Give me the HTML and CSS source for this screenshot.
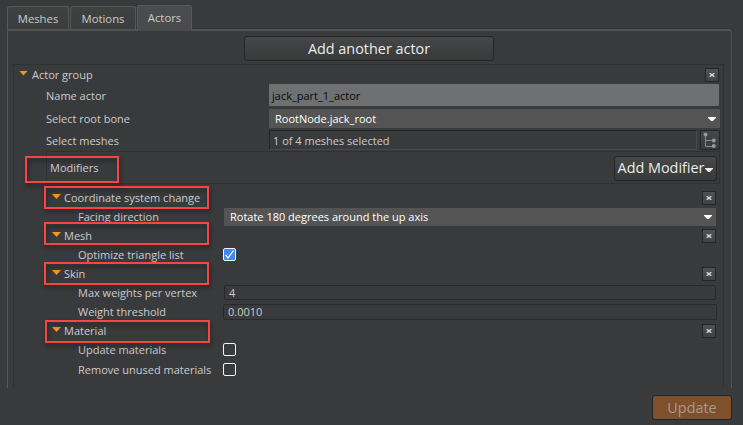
FILE: index.html
```html
<!DOCTYPE html>
<html lang="en">
<head>
<meta charset="utf-8">
<title>Actors</title>
<link rel="stylesheet" href="styles.css">
</head>
<body>
<svg class="defs" width="0" height="0">
  <symbol id="close" viewBox="0 0 6 6"><path d="M.5 1h1.2L3 2.3 4.3 1h1.2v.7L4.2 3l1.3 1.3V5H4.3L3 3.7 1.700 5H.5v-.7L1.800 3 .5 1.700z" fill="#d8d8d8"/></symbol>
  <symbol id="down" viewBox="0 0 8 4"><path d="M0 0h8v.8L4.800 4H3.200L0 .8z" fill="currentColor"/></symbol>
</svg>
<nav class="tabs">
  <span class="tab meshes">Meshes</span>
  <span class="tab motions">Motions</span>
  <span class="tab active">Actors</span>
</nav>
<main class="panel">
  <button class="button add-actor"><span>Add another actor</span></button>
  <section class="group">
    <header class="group-head">
      <i class="arrow"></i><span class="label t-group">Actor group</span>
      <button class="close"><svg><use href="#close"/></svg></button>
    </header>
    <div class="row name"><label class="label">Name actor</label><div class="text-field"><span>jack_part_1_actor</span></div></div>
    <div class="row root"><label class="label">Select root bone</label><div class="select"><span>RootNode.jack_root</span><svg><use href="#down"/></svg></div></div>
    <div class="row mesh-select"><label class="label">Select meshes</label><div class="readonly"><span>1 of 4 meshes selected</span></div>
      <button class="tree"><svg viewBox="0 0 14 16"><path d="M2.500 2v12.500h8M2.500 8.500h8" fill="none" stroke="#8b8b8b"/><circle cx="2.500" cy="2.500" r="1.900" fill="#999"/><circle cx="10.800" cy="8.500" r="1.900" fill="#999"/><circle cx="10.800" cy="14" r="1.900" fill="#999"/></svg></button>
    </div>
    <div class="modifier-bar"><span class="label">Modifiers</span><button class="button add-modifier"><span>Add Modifier</span><svg><use href="#down"/></svg></button></div>
    <div class="modifiers">
      <div class="mod-head"><i class="arrow"></i><span class="label">Coordinate system change</span><button class="close"><svg><use href="#close"/></svg></button></div>
      <div class="mod-row"><label class="label">Facing direction</label><div class="select facing"><span>Rotate 180 degrees around the up axis</span><svg><use href="#down"/></svg></div></div>
      <div class="mod-head"><i class="arrow"></i><span class="label">Mesh</span><button class="close"><svg><use href="#close"/></svg></button></div>
      <div class="mod-row"><label class="label">Optimize triangle list</label><i class="check checked"><svg viewBox="0 0 11 11"><path d="M1.500 6l2.500 3 5.500-7.500" fill="none" stroke="#fff" stroke-width="1.200"/></svg></i></div>
      <div class="mod-head"><i class="arrow"></i><span class="label">Skin</span><button class="close"><svg><use href="#close"/></svg></button></div>
      <div class="mod-row"><label class="label">Max weights per vertex</label><div class="number weights"><span>4</span></div></div>
      <div class="mod-row"><label class="label">Weight threshold</label><div class="number"><span>0.0010</span></div></div>
      <div class="mod-head"><i class="arrow"></i><span class="label">Material</span><button class="close"><svg><use href="#close"/></svg></button></div>
      <div class="mod-row"><label class="label">Update materials</label><i class="check"></i></div>
      <div class="mod-row last"><label class="label">Remove unused materials</label><i class="check"></i></div>
    </div>
  </section>
</main>
<footer><button class="button update"><span>Update</span></button></footer>
<div class="mark mark-modifiers"></div>
<div class="mark mark-coordinate"></div>
<div class="mark mark-mesh"></div>
<div class="mark mark-skin"></div>
<div class="mark mark-material"></div>
</body>
</html>
```
FILE: styles.css
```css
* { box-sizing: border-box; }
body {
  margin: 0;
  width: 743px;
  height: 425px;
  padding: 5px 11px 0 7px;
  overflow: hidden;
  background: #393a3c;
  color: #cbcbcb;
  font: 11px/18px "Open Sans", sans-serif;
  white-space: nowrap;
}
.defs { position: absolute; }
button { font: inherit; color: inherit; padding: 0; margin: 0; }
svg { display: block; }

.tabs { display: flex; align-items: flex-end; height: 24px; font-size: 11.3px; }
.tab {
  height: 23px;
  margin-right: 1px;
  padding-top: 3px;
  border: 1px solid #57585a;
  border-bottom: 0;
  border-radius: 3px 3px 0 0;
  background: linear-gradient(#404241, #3b3d3c);
  text-align: center;
}
.meshes { width: 62px; }
.motions { width: 66px; }
.tab.active { width: 55px; height: 26px; margin-bottom: -2px; padding-top: 3px; background: #4a4b4d; z-index: 1; position: relative; }

.panel {
  height: 359px;
  padding: 6px 7px 0 5px;
  border: solid #555658;
  border-width: 2px 1px 0 1px;
  border-top-color: #515254;
  box-shadow: 1px -1px 0 #303133;
  border-radius: 0 3px 0 0;
}
.button {
  display: flex;
  align-items: center;
  justify-content: center;
  border: 1px solid #242527;
  border-radius: 3px;
  background: linear-gradient(#464748, #383939);
  color: #ececec;
  font-size: 14.4px;
}
.add-actor { width: 250px; height: 25px; margin: -1px 0 3px 231px; }
.group { height: 324px; border: 1px solid #303133; border-bottom: 0; padding: 0 3px 0 0; }
.group-head { display: flex; align-items: center; height: 19px; padding: 0 1px 0 5px; }
.arrow { width: 9px; height: 5px; margin: -3px 4px 0 0; background: #f7931e; clip-path: polygon(0 0, 100% 0, 50% 100%); }
.close {
  display: grid;
  place-items: center;
  width: 14px;
  height: 14px;
  margin-left: auto;
  border: 1px solid #252628;
  background: linear-gradient(#505152, #414243);
}
.close svg { width: 6px; height: 6px; }

.row { display: flex; align-items: center; padding-left: 32px; }
.row > .label { width: 223px; flex: none; }
.name { height: 22px; }
.name > .label { padding-top: 1px; }
.root { height: 19px; margin-top: 3px; }
.mesh-select { height: 20px; margin-top: 2px; }
.mesh-select > .label { padding-top: 1px; }
.text-field { width: 450px; height: 22px; padding: 3px 0 0 3px; background: #6f7072; color: #090909; border-radius: 1px; }
.select { display: flex; align-items: center; justify-content: space-between; width: 451px; height: 19px; padding: 0 4px 0 6px; background: #545454; color: #fff; }
.select svg { width: 8px; height: 4px; }
.readonly { width: 428px; height: 20px; padding: 1px 0 0 3px; border: 1px solid #48494a; border-top-color: #242527; border-left-color: #242527; }
.tree { display: grid; place-items: center; width: 20px; height: 20px; margin-left: 3px; border: 1px solid #252628; border-radius: 2px; background: linear-gradient(#454647, #393a3b); flex: none; }
.tree svg { width: 14px; height: 16px; }

.modifier-bar {
  display: flex;
  align-items: center;
  justify-content: space-between;
  width: 674px;
  height: 33px;
  margin: 1px 0 0 32px;
  padding: 1px 2px 0 3px;
  border: 1px solid #303133;
}
.add-modifier { width: 103px; height: 25px; gap: 1px; }
.add-modifier svg { width: 8px; height: 4px; margin-top: 3px; }

.modifiers { padding: 4px 4px 0 37px; }
.mod-head, .mod-row { display: flex; align-items: center; height: 19px; }
.mod-head .arrow { margin: -2px 3px 0 1px; }
.mod-row { padding-left: 27px; }
.mod-row > .label { width: 145px; flex: none; }
.mod-row.last { margin-top: 1px; }
.facing { width: 492px; height: 18px; margin-left: 1px; flex: none; }
.number { display: flex; align-items: center; width: 494px; height: 16px; padding-left: 4px; flex: none; border: 1px solid #28292b; border-radius: 2px; }
.weights { width: 492px; height: 15px; margin-left: 1px; }
.check { width: 13px; height: 13px; border: 1px solid #f2f2f2; border-radius: 2px; }
.checked { background: #3f87f5; }

footer { display: flex; justify-content: flex-end; padding-top: 7px; }
.update { width: 80px; height: 25px; background: #80502a; color: #a19b96; }

.mark { position: absolute; left: 44px; width: 165px; height: 23px; border: 2px solid #fb4343; filter: drop-shadow(1px 3px 2px rgba(0, 0, 0, .45)); }
.mark-modifiers { left: 25px; top: 156px; width: 94px; height: 27px; }
.mark-coordinate { top: 186px; }
.mark-mesh { top: 222px; }
.mark-skin { top: 262px; }
.mark-material { left: 45px; top: 320px; }
```
